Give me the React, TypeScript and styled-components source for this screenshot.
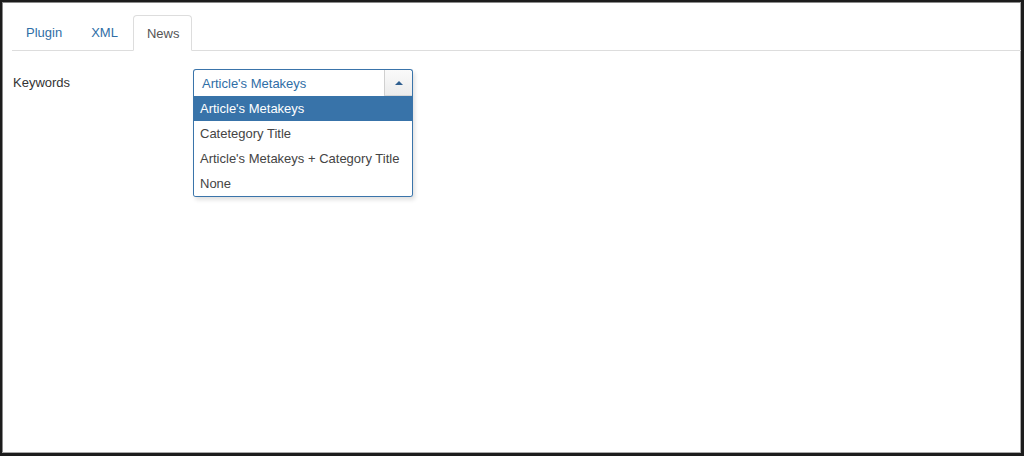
import React from "react";
import styled, { createGlobalStyle } from "styled-components";

const Global = createGlobalStyle`
  html, body { margin: 0; padding: 0; background: #fff; }
  body { font-family: "Liberation Sans", Arial, Helvetica, sans-serif; font-size: 13px; color: #333; }
  * { box-sizing: border-box; }
`;

const Frame = styled.div`
  width: 1024px;
  height: 456px;
  border: 2px solid #1c1c1c;
  border-right-width: 3px;
  border-bottom-width: 3px;
  box-shadow: inset -1px -1px 0 #a8a8a8, inset 1px 1px 0 #8a8a8a;
  background: #fff;
  padding: 12px 0 0 10px;
`;

const TabBar = styled.ul`
  display: flex;
  list-style: none;
  margin: 0;
  padding: 0;
  border-bottom: 1px solid #dddddd;
  height: 37px;
`;

const Tab = styled.li<{ $active?: boolean }>`
  display: flex;
  align-items: center;
  height: 36px;
  padding: 0 12px 0 13px;
  margin-right: 2px;
  border: 1px solid ${(p) => (p.$active ? "#dddddd" : "transparent")};
  border-bottom-color: ${(p) => (p.$active ? "#fff" : "transparent")};
  border-radius: 4px 4px 0 0;
  background: #fff;
  color: ${(p) => (p.$active ? "#555555" : "#2f6ea6")};
  font-size: 13px;
  cursor: pointer;
  position: relative;
  top: ${(p) => (p.$active ? "1px" : "0")};
`;

const FormRow = styled.div`
  display: flex;
  align-items: flex-start;
  margin-top: 18px;
  padding-left: 1px;
`;

const Label = styled.label`
  width: 180px;
  padding-top: 6px;
  color: #333;
  font-size: 13px;
  line-height: 15px;
`;

const SelectWrap = styled.div`
  width: 220px;
  display: flex;
  flex-direction: column;
  box-shadow: 2px 3px 4px rgba(0, 0, 0, 0.12);
  border-radius: 3px;
`;

const SelectHead = styled.div`
  height: 27px;
  display: flex;
  align-items: stretch;
  border: 1px solid #3a74aa;
  border-bottom: none;
  border-radius: 3px 3px 0 0;
  background: #fff;
`;

const SelectValue = styled.div`
  flex: 1;
  display: flex;
  align-items: center;
  padding-left: 8px;
  color: #2f6ea6;
  font-size: 13px;
`;

const ArrowBox = styled.div`
  width: 28px;
  display: flex;
  align-items: center;
  justify-content: center;
  border-left: 1px solid #d0d0d0;
  border-bottom: 1px solid #d8d8d8;
  border-radius: 0 3px 0 0;
  background: linear-gradient(#fafafa, #ececec);
`;

const Triangle = styled.span`
  width: 0;
  height: 0;
  border-left: 4px solid transparent;
  border-right: 4px solid transparent;
  border-bottom: 4px solid #2f5f8f;
`;

const List = styled.ul`
  list-style: none;
  margin: 0;
  padding: 0;
  border: 1px solid #3a74aa;
  border-top: none;
  border-radius: 0 0 3px 3px;
  background: #fff;
  overflow: hidden;
`;

const Option = styled.li<{ $selected?: boolean }>`
  height: 25px;
  display: flex;
  align-items: center;
  padding-left: 6px;
  font-size: 13px;
  background: ${(p) => (p.$selected ? "#3873a9" : "#fff")};
  color: ${(p) => (p.$selected ? "#fff" : "#444")};
`;

const options = [
  "Article's Metakeys",
  "Catetegory Title",
  "Article's Metakeys + Category Title",
  "None",
];

export default function App() {
  return (
    <>
      <Global />
      <Frame>
        <TabBar>
          <Tab>Plugin</Tab>
          <Tab>XML</Tab>
          <Tab $active>News</Tab>
        </TabBar>
        <FormRow>
          <Label>Keywords</Label>
          <SelectWrap>
            <SelectHead>
              <SelectValue>Article's Metakeys</SelectValue>
              <ArrowBox>
                <Triangle />
              </ArrowBox>
            </SelectHead>
            <List>
              {options.map((o, i) => (
                <Option key={o} $selected={i === 0}>
                  {o}
                </Option>
              ))}
            </List>
          </SelectWrap>
        </FormRow>
      </Frame>
    </>
  );
}
